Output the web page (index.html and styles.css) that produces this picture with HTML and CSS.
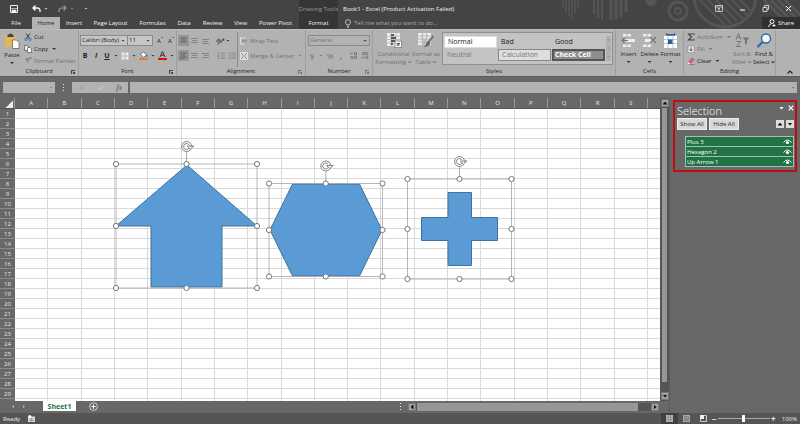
FILE: index.html
```
<!DOCTYPE html>
<html lang="en">
<head>
  <meta charset="utf-8">
  <title>Book1 - Excel</title>
  <link rel="stylesheet" href="styles.css">
</head>
<body>
  <header class="topbar">
    <svg class="topbar-art" width="240" height="29" viewBox="560 0 240 29">
      <g fill="none" stroke="#555">
        <path d="M563 0v7M566 0v12M569 0v16M572 0v19M575 0v14M578 0v8" stroke-width="1.5"/>
        <path d="M594 0v14M598 0v18M602 0v19" stroke-width="2"/>
        <path d="M611 0v20M616 0v19M621 0v17M626 0v12" stroke-width="3"/>
        <circle cx="678" cy="11" r="9" stroke-width="3"/>
        <circle cx="678" cy="11" r="3" stroke-width="2"/>
        <circle cx="725" cy="-4" r="31" stroke-width="3"/>
        <path d="M700 0l25 25M708 0l23 23M716 0l21 21M724 0l19 19M732 0l16 16M740 0l12 12" stroke-width="2"/>
        <path d="M764 0l29 29M771 0l29 29M778 0l22 22M785 0l15 15" stroke-width="3"/>
      </g>
      <circle cx="651" cy="0" r="6" fill="#555"/>
    </svg>
    <div class="titlebar">
      <div class="quick-access">
        <button class="icon-button" aria-label="Save"><svg width="8" height="8" viewBox="0 0 8 8"><path d="M.5.5h7v7h-7z" fill="none" stroke="#eee"/><path d="M2 5h4v3H2zM1 3.500h6" fill="#eee" stroke="#eee" stroke-width=".6"/></svg></button>
        <button class="icon-button" aria-label="Undo"><svg width="9" height="8" viewBox="0 0 9 8"><path d="M1 3h4.500q3 .3 2.500 4M3.500.5L1 3l2.500 2.500" fill="none" stroke="#fff" stroke-width="1.300"/></svg></button>
        <span class="caret"></span>
        <button class="icon-button" aria-label="Redo"><svg width="9" height="8" viewBox="0 0 9 8"><path d="M8 3H3.500Q.5 3.300 1 7M5.500.5L8 3 5.500 5.500" fill="none" stroke="#999" stroke-width="1.200"/></svg></button>
        <span class="caret dim"></span>
        <span class="caret last"></span>
      </div>
      <div class="context-title">Drawing Tools</div>
      <div class="doc-title">Book1 - Excel (Product Activation Failed)</div>
      <div class="window-buttons">
        <button class="icon-button" aria-label="Ribbon display options"><svg width="8" height="7" viewBox="0 0 8 7"><path d="M.5.5h7v6h-7zM.5 2h7M4 6V3M2.800 4L4 3l1.200 1" fill="none" stroke="#ddd" stroke-width=".8"/></svg></button>
        <button class="icon-button" aria-label="Minimize"><svg width="7" height="7" viewBox="0 0 7 7"><path d="M1 5h5" stroke="#fff"/></svg></button>
        <button class="icon-button" aria-label="Restore"><svg width="7" height="7" viewBox="0 0 7 7"><path d="M1 2.500h4v4H1zM2.500 2.500v-2h4v4H5" fill="none" stroke="#eee" stroke-width=".8"/></svg></button>
        <button class="icon-button" aria-label="Close"><svg width="7" height="7" viewBox="0 0 7 7"><path d="M1 1l5 5M6 1L1 6" stroke="#fff"/></svg></button>
      </div>
    </div>
    <nav class="tabs">
      <a href="#" class="tab">File</a>
      <a href="#" class="tab active">Home</a>
      <a href="#" class="tab">Insert</a>
      <a href="#" class="tab">Page Layout</a>
      <a href="#" class="tab">Formulas</a>
      <a href="#" class="tab">Data</a>
      <a href="#" class="tab">Review</a>
      <a href="#" class="tab">View</a>
      <a href="#" class="tab">Power Pivot</a>
      <a href="#" class="tab context">Format</a>
      <label class="tell-me">
        <svg width="6" height="9" viewBox="0 0 6 9"><path d="M2 6Q.6 4.500.6 3a2.400 2.400 0 0 1 4.800 0Q5.400 4.500 4 6zM2 7.200h2M2.200 8.400h1.600" fill="none" stroke="#ddd" stroke-width=".8"/></svg>
        <input type="text" placeholder="Tell me what you want to do..." aria-label="Tell me what you want to do">
      </label>
      <button class="share">
        <svg width="8" height="8" viewBox="0 0 8 8"><circle cx="4" cy="2.500" r="2" fill="none" stroke="#fff"/><path d="M.6 8q.4-3 3-3.300M4.500 6.500h3M6 5v3" fill="none" stroke="#fff" stroke-width=".9"/></svg>
        Share
      </button>
    </nav>
  </header>

  <section class="ribbon">
    <div class="group clipboard">
      <div class="group-body">
        <button class="big">
          <svg width="16" height="16" viewBox="0 0 16 16"><path d="M1 2h11v12H1z" fill="#e2b65b"/><path d="M3.500 1.500h1.500a1.600 1.600 0 0 1 3 0h1.500v2.500h-6z" fill="#444"/><path d="M8.500 7h4l2.500 2.500V15.500H8.500z" fill="#fff" stroke="#555" stroke-width=".7"/></svg>
          <span>Paste</span><span class="caret"></span>
        </button>
        <div class="rows">
          <button class="small"><svg width="8" height="8" viewBox="0 0 8 8"><path d="M2 .5l3.500 5M6 .5L2.500 5.500" stroke="#333" stroke-width=".9"/><circle cx="2" cy="6.300" r="1.200" fill="none" stroke="#2b6cb0" stroke-width=".8"/><circle cx="6" cy="6.300" r="1.200" fill="none" stroke="#2b6cb0" stroke-width=".8"/></svg>Cut</button>
          <button class="small"><svg width="8" height="8" viewBox="0 0 8 8"><path d="M.5.500h3L5 2v3.500H.5z" fill="#eee" stroke="#456" stroke-width=".7"/><path d="M3.500 2.500h2.500l1.500 1.500v3.500h-4z" fill="#fff" stroke="#456" stroke-width=".7"/></svg>Copy <span class="caret"></span></button>
          <button class="small off"><svg width="8" height="8" viewBox="0 0 8 8"><path d="M1 1.500l3-.5 1 2-1.500 3z" fill="#888"/><path d="M4.500 2l3-1.500" stroke="#777" stroke-width="1.300"/></svg>Format Painter</button>
        </div>
      </div>
      <div class="group-name">Clipboard<i class="launcher"></i></div>
    </div>

    <div class="group font">
      <div class="group-body rows two">
        <div class="line">
          <span class="combo font-name"><select aria-label="Font"><option>Calibri (Body)</option></select></span>
          <span class="combo font-size"><select aria-label="Font size"><option>11</option></select></span>
          <button class="letter grow">A<sup>ˆ</sup></button>
          <button class="letter">A<sup>ˇ</sup></button>
        </div>
        <div class="line spaced">
          <button class="letter"><b>B</b></button>
          <button class="letter"><b><em>I</em></b></button>
          <button class="letter"><b><u>U</u></b></button>
          <span class="caret"></span>
          <button class="letter" aria-label="Borders"><svg width="8" height="8" viewBox="0 0 8 8"><path d="M.5.500h7v7h-7z" fill="#eee"/><path d="M4 0v8M0 4h8" stroke="#999" stroke-width=".7"/></svg></button>
          <span class="caret"></span>
          <button class="letter" aria-label="Fill color"><svg width="9" height="9" viewBox="0 0 9 9"><path d="M1.500 3.500L4.500.8l3 3-3 2.700z" fill="#fff" stroke="#444" stroke-width=".7"/><path d="M7 3q1.800 1 1 3" fill="none" stroke="#2b6cb0"/><path d="M0 7h9v2H0z" fill="#ed7d31"/></svg></button>
          <span class="caret"></span>
          <button class="letter" aria-label="Font color"><svg width="9" height="9" viewBox="0 0 9 9"><path d="M2 6L4.500.5 7 6M3 4.200h3" fill="none" stroke="#333"/><path d="M0 7h9v2H0z" fill="#e01010"/></svg></button>
          <span class="caret"></span>
        </div>
      </div>
      <div class="group-name">Font<i class="launcher"></i></div>
    </div>

    <div class="group alignment">
      <div class="group-body">
        <div class="rows two align-buttons">
          <div class="line">
            <button class="align on" aria-label="Top align"><svg width="7" height="7" viewBox="0 0 7 7"><path d="M0 1h7M1 3h5M0 5h7" stroke="#555" stroke-width=".8"/></svg></button>
            <button class="align" aria-label="Middle align"><svg width="7" height="7" viewBox="0 0 7 7"><path d="M0 1.500h7M1 3.500h5M0 5.500h7" stroke="#777" stroke-width=".8"/></svg></button>
            <button class="align" aria-label="Bottom align"><svg width="7" height="7" viewBox="0 0 7 7"><path d="M0 2.500h7M1 4.500h5M0 6.500h7" stroke="#777" stroke-width=".8"/></svg></button>
            <button class="align gap" aria-label="Orientation"><svg width="9" height="8" viewBox="0 0 9 8"><circle cx="2" cy="4" r="1.300" fill="none" stroke="#444" stroke-width=".8"/><path d="M3 1.500l2.500 4M1.500 7.500L8 2M8 2L6 2.300M8 2l-.3 2" fill="none" stroke="#444" stroke-width=".9"/></svg></button>
            <span class="caret"></span>
          </div>
          <div class="line">
            <button class="align on" aria-label="Align left"><svg width="7" height="7" viewBox="0 0 7 7"><path d="M0 1h7M0 3h5M0 5h7M0 6.800h5" stroke="#555" stroke-width=".8"/></svg></button>
            <button class="align" aria-label="Center"><svg width="7" height="7" viewBox="0 0 7 7"><path d="M0 1.500h7M1 3.500h5M0 5.500h7" stroke="#777" stroke-width=".8"/></svg></button>
            <button class="align" aria-label="Align right"><svg width="7" height="7" viewBox="0 0 7 7"><path d="M0 1.500h7M2 3.500h5M0 5.500h7" stroke="#777" stroke-width=".8"/></svg></button>
            <button class="align gap" aria-label="Decrease indent"><svg width="8" height="7" viewBox="0 0 8 7"><path d="M0 1h8M4 3h4M4 5h4M0 6.700h8M3 4H0M1.300 2.800L0 4l1.300 1.200" fill="none" stroke="#888" stroke-width=".8"/></svg></button>
            <button class="align" aria-label="Increase indent"><svg width="8" height="7" viewBox="0 0 8 7"><path d="M0 1h8M4 3h4M4 5h4M0 6.700h8M0 4h3M1.700 2.800L3 4 1.700 5.200" fill="none" stroke="#888" stroke-width=".8"/></svg></button>
          </div>
        </div>
        <div class="rows two merge">
          <button class="small off"><svg width="8" height="8" viewBox="0 0 8 8"><path d="M.5.500v7M.5 1h5M.5 7h4" fill="none" stroke="#ddd"/><path d="M2 4h5.500M5 2.500L3.500 4 5 5.500" fill="none" stroke="#888"/></svg>Wrap Text</button>
          <button class="small off"><svg width="8" height="8" viewBox="0 0 8 8"><path d="M0 0h8v8H0z" fill="#ddd"/><path d="M1 1l2 2M7 1L5 3M1 7l2-2M7 7L5 5M2 4h4" stroke="#888" stroke-width=".9"/></svg>Merge &amp; Center <span class="caret dim"></span></button>
        </div>
      </div>
      <div class="group-name">Alignment<i class="launcher dim"></i></div>
    </div>

    <div class="group number">
      <div class="group-body rows two">
        <span class="combo disabled"><select aria-label="Number format" disabled><option>General</option></select></span>
        <div class="line number-buttons off">
          <button class="letter">$</button><span class="caret dim"></span>
          <button class="letter">%</button>
          <button class="letter"><b>,</b></button>
          <button class="letter bar" aria-label="Increase decimal"><svg width="8" height="7" viewBox="0 0 8 7"><path d="M3 1.500H0M1 .5L0 1.500l1 1" fill="none" stroke="#777" stroke-width=".7"/><path d="M4.500.5h2v2.500h-2zM1 4.500h2v2.200H1zM4.500 4.500h2v2.200h-2z" fill="none" stroke="#777" stroke-width=".9"/></svg></button>
          <button class="letter" aria-label="Decrease decimal"><svg width="8" height="7" viewBox="0 0 8 7"><path d="M0 5.500h3M2 4.500l1 1-1 1" fill="none" stroke="#777" stroke-width=".7"/><path d="M1.500.5h2v2.200h-2zM4.800.5h2v2.200h-2zM4.800 4.300h2v2.200h-2z" fill="none" stroke="#777" stroke-width=".9"/></svg></button>
        </div>
      </div>
      <div class="group-name">Number<i class="launcher dim"></i></div>
    </div>

    <div class="group styles">
      <div class="group-body">
        <button class="big off">
          <svg width="16" height="15" viewBox="0 0 16 15"><path d="M1 0h13v13H1z" fill="#eee"/><path d="M1 3.300h13M1 6.500h13M1 9.800h13M5 0v13M10 0v13" stroke="#aaa" stroke-width=".7"/><path d="M5 1h3v2H5zM5 4h5v2H5zM5 7h4v2H5zM5 10h2v2H5z" fill="#555"/><path d="M9 8h6.500v6.500H9z" fill="#fff" stroke="#777" stroke-width=".8"/><path d="M10.500 10.500h3.500M10.500 12h3.500M13 9.500l-1.500 3.500" stroke="#333" stroke-width=".7"/></svg>
          <span>Conditional<br>Formatting <span class="caret dim"></span></span>
        </button>
        <button class="big off table">
          <svg width="16" height="15" viewBox="0 0 16 15"><path d="M0 0h13v12H0z" fill="#eee"/><path d="M0 3h13M0 6h13M0 9h13M4.300 0v12M8.600 0v12" stroke="#999" stroke-width=".7"/><path d="M4.300 6h4.300v6H4.300z" fill="#bbb"/><path d="M15.500 3L10.500 9" stroke="#777" stroke-width="2"/><path d="M10.500 8l2 2q-1.500 4-7 4 3-1.500 3-4 .5-2 2-2z" fill="#666"/></svg>
          <span>Format as<br>Table <span class="caret dim"></span></span>
        </button>
        <div class="gallery">
          <button class="style normal">Normal</button>
          <button class="style">Bad</button>
          <button class="style">Good</button>
          <button class="style neutral">Neutral</button>
          <button class="style calc">Calculation</button>
          <button class="style check">Check Cell</button>
          <div class="gallery-scroll"><span class="caret"></span><span class="caret"></span><span class="caret"></span></div>
        </div>
      </div>
      <div class="group-name">Styles</div>
    </div>

    <div class="group cells">
      <div class="group-body">
        <button class="big"><svg width="15" height="15" viewBox="0 0 15 15"><path d="M2 1h3.500v2.500H2zM6.500 1H10v2.500H6.500zM5 6h9v3H5zM2 11.500h3.500V14H2zM6.500 11.500H10V14H6.500z" fill="#eee"/><path d="M7 7.500H1M3.500 5L1 7.500 3.500 10" fill="none" stroke="#777" stroke-width="1.200"/></svg><span>Insert</span><span class="caret"></span></button>
        <button class="big"><svg width="15" height="15" viewBox="0 0 15 15"><path d="M1 1h3.500v2.500H1zM5.500 1H9v2.500H5.500zM3 6h6v3H3zM1 11.500h3.500V14H1zM5.500 11.500H9V14H5.500z" fill="#eee"/><path d="M8 4l6 6M14 4l-6 6" stroke="#777" stroke-width="1.200"/></svg><span>Delete</span><span class="caret"></span></button>
        <button class="big"><svg width="15" height="15" viewBox="0 0 15 15"><path d="M1 3h13v12H1z" fill="#fff"/><path d="M1 6.500h13M1 10.500h13M5 3v12M10 3v12" stroke="#aaa" stroke-width=".7"/><path d="M5 6.500h4.500V11H5zM3 0v2.500h9V0h-1v1H4V0z" fill="#1f5fa8"/></svg><span>Format</span><span class="caret"></span></button>
      </div>
      <div class="group-name">Cells</div>
    </div>

    <div class="group editing">
      <div class="group-body">
        <div class="rows">
          <button class="small off"><svg width="8" height="8" viewBox="0 0 8 8"><path d="M7 1.800V1H1.500l3 3-3 3H7v-.8" fill="none" stroke="#444" stroke-width="1.200"/></svg>AutoSum <span class="caret dim"></span></button>
          <button class="small off"><svg width="8" height="8" viewBox="0 0 8 8"><path d="M1 1h6v6.500H1z" fill="#eee" stroke="#888" stroke-width=".6"/><path d="M4 2v4M2.500 4.500L4 6l1.500-1.500" fill="none" stroke="#444" stroke-width=".9"/></svg>Fill <span class="caret dim"></span></button>
          <button class="small"><svg width="8" height="8" viewBox="0 0 8 8"><path d="M1 5l4-4.500 2.500 2L3.500 7z" fill="#d8577a"/><path d="M1 5l2.500 2L2.500 7.500.5 6z" fill="#fff"/><path d="M2 7.700h6" stroke="#555" stroke-width=".6"/></svg>Clear <span class="caret"></span></button>
        </div>
        <button class="big off"><svg width="15" height="15" viewBox="0 0 15 15"><path d="M1 6.500L3.500.5 6 6.500M2 4.500h3M1.500 8.500h4l-4 5h4.500" fill="none" stroke="#777"/><path d="M7.500 4.500h7L12 7.500V12l-2-1.500v-3z" fill="#777"/></svg><span>Sort &amp;<br>Filter <span class="caret dim"></span></span></button>
        <button class="big"><svg width="16" height="15" viewBox="0 0 16 15"><circle cx="10" cy="5.500" r="4.500" fill="#f4f8fc" stroke="#2a65a5" stroke-width="1.400"/><path d="M6.500 9L1.500 14" stroke="#2a65a5" stroke-width="2.200"/></svg><span>Find &amp;<br>Select <span class="caret"></span></span></button>
      </div>
      <div class="group-name">Editing</div>
    </div>
    <button class="collapse" aria-label="Collapse the ribbon"><svg width="6" height="4" viewBox="0 0 6 4"><path d="M.5 3.500L3 1l2.500 2.500" fill="none" stroke="#222" stroke-width="1.100"/></svg></button>
  </section>

  <section class="formula-bar">
    <span class="combo name-box"><select aria-label="Name box"><option></option></select></span>
    <span class="dots"></span>
    <div class="formula-buttons">
      <button aria-label="Cancel"><svg width="7" height="7" viewBox="0 0 7 7"><path d="M1 1l5 5M6 1L1 6" stroke="#999"/></svg></button>
      <button aria-label="Enter"><svg width="7" height="7" viewBox="0 0 7 7"><path d="M.5 3.500L2.500 6l4-5" fill="none" stroke="#ccc"/></svg></button>
      <button class="fx">fx</button>
    </div>
    <label class="formula"><input type="text" aria-label="Formula bar"><span class="caret dim"></span></label>
  </section>

  <main class="workspace">
    <div class="sheet-area">
      <div class="sheet">
        <table class="cells-table">
          <thead><tr id="column-heads"></tr></thead>
          <tbody id="rows"></tbody>
        </table>
        <svg class="drawing" width="660" height="304" viewBox="0 98 660 304">
          <defs>
            <circle id="handle" r="2.600" fill="#fff" stroke="#777"/>
            <g id="rotate" fill="none" stroke="#808080">
              <circle r="4.300" fill="#fff" stroke="none"/>
              <path d="M4.500-2.300A5 5 0 1 0 4.500 2.300M2.400-1.800A3 3 0 1 0 2.400 1.800"/>
              <path d="M4.500-2.300L5 0M1 0L4 2.500 7.500-.5H1z"/>
              <path d="M0 5.500V17" stroke="#999" stroke-width=".8"/>
            </g>
          </defs>
          <g fill="#5b9bd5" stroke="#41719c">
            <path d="M187 165L257 226H222V287H151V226H116z"/>
            <path d="M292.500 184H359.500L382 230L359.500 276H292.500L270 230z"/>
            <path d="M448 192.500H471.500V217.500H497.500V240.500H471.500V265.500H448V240.500H421.500V217.500H448z"/>
          </g>
          <g id="selections"></g>
        </svg>
      </div>
      <div class="scroll vertical">
        <button class="scroll-button" aria-label="Scroll up"><i class="tri up"></i></button>
        <div class="thumb"></div>
        <button class="scroll-button" aria-label="Scroll down"><i class="tri down"></i></button>
      </div>
      <div class="sheet-bar">
        <button class="sheet-nav" aria-label="Previous sheet"><i class="tri left"></i></button>
        <button class="sheet-nav" aria-label="Next sheet"><i class="tri right"></i></button>
        <button class="sheet-tab">Sheet1</button>
        <button class="add-sheet" aria-label="New sheet"><svg width="9" height="9" viewBox="0 0 9 9"><circle cx="4.500" cy="4.500" r="3.900" fill="none" stroke="#ddd" stroke-width=".9"/><path d="M4.500 2.300v4.400M2.300 4.500h4.400" stroke="#fff"/></svg></button>
        <span class="dots"></span>
        <div class="scroll horizontal">
          <button class="scroll-button" aria-label="Scroll left"><i class="tri left"></i></button>
          <div class="thumb"></div>
          <button class="scroll-button" aria-label="Scroll right"><i class="tri right"></i></button>
        </div>
      </div>
    </div>

    <aside class="pane">
      <div class="selection-pane">
        <div class="pane-head">
          <h2>Selection</h2>
          <button class="icon-button" aria-label="Pane options"><i class="tri down"></i></button>
          <button class="icon-button" aria-label="Close pane"><svg width="6" height="6" viewBox="0 0 6 6"><path d="M.7.7l4.600 4.600M5.300.7L.7 5.300" stroke="#fff" stroke-width="1.200"/></svg></button>
        </div>
        <div class="pane-actions">
          <button class="show-hide">Show All</button>
          <button class="show-hide">Hide All</button>
          <button class="move first" aria-label="Bring forward"><i class="tri up"></i></button>
          <button class="move" aria-label="Send backward"><i class="tri down"></i></button>
        </div>
        <ul class="objects">
          <li>Plus 3 <button class="icon-button" aria-label="Hide Plus 3"><svg width="9" height="6" viewBox="0 0 9 6"><path d="M.5 3.500Q4.500-1.500 8.500 3.500" fill="none" stroke="#fff"/><circle cx="4.500" cy="3.500" r="1.600" fill="#fff"/></svg></button></li>
          <li>Hexagon 2 <button class="icon-button" aria-label="Hide Hexagon 2"><svg width="9" height="6" viewBox="0 0 9 6"><path d="M.5 3.500Q4.500-1.500 8.500 3.500" fill="none" stroke="#fff"/><circle cx="4.500" cy="3.500" r="1.600" fill="#fff"/></svg></button></li>
          <li>Up Arrow 1 <button class="icon-button" aria-label="Hide Up Arrow 1"><svg width="9" height="6" viewBox="0 0 9 6"><path d="M.5 3.500Q4.500-1.500 8.500 3.500" fill="none" stroke="#fff"/><circle cx="4.500" cy="3.500" r="1.600" fill="#fff"/></svg></button></li>
        </ul>
      </div>
    </aside>
  </main>

  <footer class="status">
    <span>Ready</span>
    <svg class="macro" width="7" height="7" viewBox="0 0 7 7"><path d="M0 1.500h7V7H0z" fill="#ddd"/><path d="M1 4h5M1 5.500h5M3.500 3v4" stroke="#777" stroke-width=".5"/><circle cx="1.800" cy="1.500" r="1.500" fill="#fff"/></svg>
    <div class="views">
      <button class="view on" aria-label="Normal view"><svg width="7" height="7" viewBox="0 0 7 7"><path d="M0 0h7v7H0z" fill="#bbb"/><path d="M0 2.300h7M0 4.600h7M2.300 0v7M4.600 0v7" stroke="#777" stroke-width=".5"/></svg></button>
      <button class="view" aria-label="Page layout view"><svg width="7" height="7" viewBox="0 0 7 7"><path d="M0 0h7v7H0z" fill="#aaa"/><path d="M1.500 1.500h4v4h-4zM2 3h3M2 4.300h3" fill="none" stroke="#666" stroke-width=".6"/></svg></button>
      <button class="view" aria-label="Page break view"><svg width="7" height="7" viewBox="0 0 7 7"><path d="M.5.500h6v6h-6z" fill="none" stroke="#ccc"/><path d="M0 0h4v4H0z" fill="#eee"/></svg></button>
    </div>
    <button class="zoom-step">−</button>
    <input type="range" class="zoom" min="0" max="200" value="100" aria-label="Zoom">
    <button class="zoom-step">+</button>
    <span class="percent">100%</span>
  </footer>

  <script>
    const heads = document.getElementById("column-heads");
    const rows = document.getElementById("rows");
    const letters = "ABCDEFGHIJKLMNOPQRS".split("");
    const rowCount = 29;

    heads.innerHTML = '<th class="corner"></th>' + letters.map(l => `<th>${l}</th>`).join("") + "<th></th>";

    // one extra unlabelled row runs under the sheet tabs
    for (let i = 1; i <= rowCount + 1; i++) {
      rows.innerHTML += `<tr><th>${i <= rowCount ? i : ""}</th>${"<td></td>".repeat(letters.length + 1)}</tr>`;
    }

    // selection frames: left, top, right, bottom
    const frames = [
      [116, 164, 257, 288],
      [269, 183.5, 382.5, 276.5],
      [407.5, 179, 511.5, 279]
    ];

    let markup = "";
    frames.forEach(([x1, y1, x2, y2]) => {
      const cx = (x1 + x2) / 2;
      const cy = (y1 + y2) / 2;
      markup += `<rect x="${x1}" y="${y1}" width="${x2 - x1}" height="${y2 - y1}" fill="none" stroke="#a6a6a6" stroke-width="0.8"/>`;
      markup += `<use href="#rotate" x="${cx}" y="${y1 - 17.5}"/>`;
      [[x1, y1], [cx, y1], [x2, y1], [x1, cy], [x2, cy], [x1, y2], [cx, y2], [x2, y2]].forEach(([x, y]) => {
        markup += `<use href="#handle" x="${x}" y="${y}"/>`;
      });
    });
    document.getElementById("selections").innerHTML = markup;
  </script>
</body>
</html>
```
FILE: styles.css
```
* {
  box-sizing: border-box;
}

body {
  margin: 0;
  height: 100vh;
  display: flex;
  flex-direction: column;
  overflow: hidden;
  background-color: #686868;
  color: #222;
  font-family: "Open Sans", "Noto Sans", sans-serif;
  font-size: 6px;
  line-height: 8px;
}

button,
input,
select {
  font: inherit;
  color: inherit;
  margin: 0;
  padding: 0;
  border: none;
  border-radius: 0;
  background: none;
  outline: none;
}

a {
  color: inherit;
  text-decoration: none;
}

svg {
  display: block;
  flex: none;
}

.caret {
  display: inline-block;
  flex: none;
  width: 4px;
  height: 2px;
  background-color: #333;
  clip-path: polygon(0 0, 100% 0, 50% 100%);
  vertical-align: middle;
}

.caret.dim {
  background-color: #777;
}

.tri {
  display: block;
  width: 5px;
  height: 3px;
  background-color: #111;
}

.tri.up {
  clip-path: polygon(50% 0, 100% 100%, 0 100%);
}

.tri.down {
  clip-path: polygon(0 0, 100% 0, 50% 100%);
}

.tri.left,
.tri.right {
  width: 3px;
  height: 5px;
}

.tri.left {
  clip-path: polygon(100% 0, 100% 100%, 0 50%);
}

.tri.right {
  clip-path: polygon(0 0, 100% 50%, 0 100%);
}

.icon-button {
  display: flex;
  align-items: center;
  justify-content: center;
}

/* top bar */
.topbar {
  position: relative;
  background-color: #444;
  color: #f2f2f2;
  height: 29px;
  flex: none;
}

.topbar-art {
  position: absolute;
  right: 0;
  top: 0;
}

.titlebar {
  position: relative;
  display: grid;
  grid-template-columns: 299px 39px 1fr auto;
  height: 17px;
  align-items: center;
}

.quick-access {
  display: flex;
  align-items: center;
  padding-left: 10px;
}

.quick-access .caret {
  background-color: #ccc;
  margin: 0 10px 0 3px;
}

.quick-access .icon-button:first-child {
  margin-right: 14px;
}

.quick-access .caret.dim {
  background-color: #888;
}

.quick-access .caret.last {
  margin: 0;
}

.context-title {
  display: flex;
  align-items: center;
  justify-content: center;
  height: 17px;
  background-color: #363636;
  color: #999;
  white-space: nowrap;
}

.doc-title {
  padding-left: 5px;
}

.window-buttons {
  display: flex;
  gap: 16px;
  padding-right: 8px;
}

.tabs {
  position: relative;
  display: grid;
  grid-template-columns: 32px 28px 28px 45px 39px 24px 33px 23px 47px 39px 1fr 38px;
  height: 12px;
}

.tab {
  text-align: center;
  line-height: 12px;
  white-space: nowrap;
}

.tab.active {
  background-color: #b2b2b2;
  color: #222;
}

.tab.context {
  background-color: #363636;
}

.tell-me {
  display: flex;
  align-items: center;
  gap: 3px;
  padding-left: 7px;
}

.tell-me input {
  flex: 1;
}

.tell-me input::placeholder {
  color: #aaa;
}

.share {
  display: flex;
  align-items: center;
  justify-content: center;
  gap: 2px;
  background-color: #303030;
}

/* ribbon */
.ribbon {
  display: flex;
  flex: none;
  height: 47px;
  background-color: #b2b2b2;
  border-top: 1px solid #bcbcbc;
}

.group {
  display: flex;
  flex-direction: column;
  border-right: 1px solid #9e9e9e;
}

.group-body {
  display: flex;
  flex: 1;
  padding-top: 2px;
}

.group-name {
  display: flex;
  height: 9px;
  justify-content: center;
  position: relative;
}

.launcher {
  position: absolute;
  right: 3px;
  top: 3px;
  width: 4px;
  height: 4px;
  border-left: 1px solid #444;
  border-top: 1px solid #444;
  background: linear-gradient(#444, #444) right bottom / 2px 2px no-repeat;
}

.launcher.dim {
  opacity: 0.5;
}

.off {
  color: #707070;
}

.clipboard {
  width: 79px;
}

.font {
  width: 98px;
}

.alignment {
  width: 129px;
}

.number {
  width: 67px;
}

.styles {
  width: 243px;
}

.cells {
  width: 68px;
}

.editing {
  width: 92px;
}

.big {
  display: flex;
  flex-direction: column;
  align-items: center;
  padding-top: 1px;
  white-space: nowrap;
  gap: 2px;
}

.big > .caret {
  margin-top: 1px;
}

.clipboard .big {
  width: 24px;
}

.rows {
  display: flex;
  flex-direction: column;
  gap: 4px;
}

.group-body > .rows {
  padding-top: 1px;
}

.group-body.rows.two,
.group-body > .rows.two {
  gap: 4px;
}

.group-body.rows.two {
  padding-top: 5px;
}

.group-body > .rows.two {
  padding-top: 3px;
}

.small {
  display: flex;
  align-items: center;
  gap: 2px;
  height: 8px;
  white-space: nowrap;
}

.small .caret {
  margin-left: 2px;
}

.line {
  display: flex;
  align-items: center;
  height: 11px;
}

.combo {
  display: grid;
  align-items: center;
  height: 11px;
  border: 1px solid #8a8a8a;
  background-color: #c6c6c6;
}

.combo select {
  appearance: none;
  grid-area: 1 / 1;
  width: 100%;
  height: 9px;
  line-height: 9px;
  padding-left: 1px;
}

.combo::after {
  content: "";
  grid-area: 1 / 1;
  justify-self: end;
  width: 4px;
  height: 2px;
  margin-right: 2px;
  background-color: #333;
  clip-path: polygon(0 0, 100% 0, 50% 100%);
  pointer-events: none;
}

.combo.disabled {
  margin: 0 2px;
  background-color: #b2b2b2;
  color: #777;
}

.combo.disabled select {
  opacity: 1;
}

.font-name {
  width: 48px;
  margin-left: 1px;
}

.font-size {
  width: 25px;
  border-left: none;
}

.letter {
  display: flex;
  justify-content: center;
  min-width: 8px;
}

.letter sup {
  font-size: 6px;
  line-height: 4px;
}

.letter.grow {
  margin: 0 3px;
}

.spaced {
  padding-left: 2px;
  gap: 3px;
}

.spaced .letter {
  font-size: 7px;
}

.align-buttons {
  width: 61px;
  padding-left: 1px;
  border-right: 1px solid #8a8a8a;
}

.align {
  display: flex;
  align-items: center;
  justify-content: center;
  width: 11px;
  height: 11px;
}

.align.gap {
  margin-left: 4px;
}

.align.on {
  background-color: #969696;
}

.merge {
  padding-left: 2px;
}

.merge .small {
  height: 11px;
}

.number-buttons {
  padding-left: 2px;
  gap: 3px;
}

.number-buttons .letter {
  font-size: 8px;
}

.number-buttons .bar {
  margin-left: 2px;
}

.styles .group-body {
  padding-left: 3px;
}

.cells .group-body {
  padding-left: 2px;
}

.styles .big {
  width: 35px;
}

.styles .big.table {
  width: 30px;
}

.gallery {
  flex: 1;
  display: grid;
  grid-template-columns: 53px 53px 53px 1fr;
  grid-template-rows: 12px 12px;
  gap: 1px;
  margin: 0 2px 0 1px;
  padding: 3px 1px;
  height: 33px;
  border: 1px solid #909090;
  background-color: #c3c3c3;
}

.style {
  text-align: left;
  padding: 0 3px;
  font-size: 7px;
  background-color: #c3c3c3;
}

.style.normal {
  background-color: #fff;
  border: 1px solid #ddd;
}

.style.neutral {
  color: #777;
}

.style.calc {
  color: #777;
  background-color: #dedede;
  border: 1px solid #888;
}

.style.check {
  color: #fff;
  font-weight: bold;
  background-color: #8e8e8e;
  border: 2px solid #555;
  padding: 0 1px;
}

.gallery-scroll {
  grid-column: 4;
  grid-row: 1 / 3;
  display: flex;
  flex-direction: column;
  align-items: center;
  justify-content: space-around;
  background-color: #b2b2b2;
}

.gallery-scroll .caret {
  background-color: #999;
}

.cells .big {
  width: 21px;
}

.editing .group-body {
  padding-left: 3px;
}

.editing .rows {
  width: 44px;
}

.editing .big {
  width: 22px;
}

.collapse {
  margin-left: auto;
  padding: 0 7px 2px 0;
  align-self: flex-end;
}

/* formula bar */
.formula-bar {
  display: flex;
  flex: none;
  height: 22px;
  padding: 5px 3px;
  border-top: 1px solid #5c5c5c;
}

.name-box {
  width: 52px;
  border: none;
  background-color: #b2b2b2;
}

.name-box::after {
  background-color: #888;
}

.dots {
  width: 1px;
  height: 7px;
  margin: 2px 8px;
  background: repeating-linear-gradient(#eee 0 1px, transparent 1px 3px);
}

.formula-buttons {
  display: flex;
  align-items: center;
  justify-content: space-around;
  width: 56px;
  height: 11px;
  margin-right: 2px;
  background-color: #b2b2b2;
}

.fx {
  font-family: "Liberation Serif", serif;
  font-style: italic;
  font-size: 8px;
  color: #555;
}

.formula {
  display: flex;
  flex: 1;
  align-items: center;
  height: 11px;
  padding-right: 2px;
  background-color: #b2b2b2;
}

.formula input {
  flex: 1;
}

/* sheet */
.workspace {
  display: flex;
  flex: 1;
  min-height: 0;
}

.sheet-area {
  display: grid;
  flex: 1;
  grid-template-columns: 1fr 10px;
  grid-template-rows: 1fr 12px;
  min-width: 0;
}

.sheet {
  position: relative;
  overflow: hidden;
  min-height: 0;
}

.drawing {
  position: absolute;
  left: 0;
  top: 0;
}

.cells-table,
.cells-table thead,
.cells-table tbody {
  display: block;
}

.cells-table tr {
  display: grid;
  grid-template-columns: 15px repeat(19, 1fr) 12px;
}

.cells-table th {
  height: 10px;
  padding: 0;
  font-size: 6px;
  font-weight: normal;
  line-height: 10px;
  color: #e6e6e6;
  background-color: #686868;
  border-bottom: 1px solid #8c8c8c;
}

.cells-table thead th {
  height: 11px;
  border-right: 1px solid #9a9a9a;
  border-bottom-color: #555;
}

.cells-table thead .corner {
  background: linear-gradient(135deg, transparent 50%, #eee 50%) 6px 3px / 7px 7px no-repeat #686868;
}

.cells-table td {
  height: 10px;
  padding: 0;
  background-color: #fff;
  border-right: 1px solid #d9d9d9;
  border-bottom: 1px solid #d9d9d9;
}

.cells-table td:last-child,
.cells-table thead th:last-child {
  border-right: none;
}

.scroll {
  display: flex;
  background-color: #555;
}

.scroll.vertical {
  flex-direction: column;
  padding: 1px;
  border-right: 1px solid #5c5c5c;
}

.scroll-button {
  display: flex;
  align-items: center;
  justify-content: center;
  width: 8px;
  height: 8px;
  flex: none;
  background-color: #a0a0a0;
  border: 1px solid #777;
}

.thumb {
  background-color: #969696;
}

.vertical .thumb {
  flex: 1;
  margin: 1px 1px 10px;
}

.sheet-bar {
  grid-column: 1 / 3;
  display: flex;
  align-items: flex-start;
  border-right: 1px solid #5c5c5c;
}

.sheet-nav {
  padding: 4px 0 0 12px;
}

.sheet-nav + .sheet-nav {
  padding-left: 9px;
}

.sheet-nav .tri {
  width: 2px;
  height: 3px;
  background-color: #bbb;
}

.sheet-tab {
  width: 33px;
  height: 10px;
  margin-left: 18px;
  font-size: 7px;
  line-height: 9px;
  font-weight: bold;
  color: #217346;
  background-color: #fff;
}

.add-sheet {
  margin: 1px 0 0 13px;
}

.sheet-bar .dots {
  margin-left: auto;
  margin-right: 7px;
}

.horizontal {
  width: 251px;
  height: 8px;
  margin: 2px 10px 0 0;
}

.horizontal .thumb {
  flex: 1;
  margin: 0 13px 0 1px;
}

/* selection pane */
.pane {
  width: 130px;
  padding: 2px 3px;
}

.selection-pane {
  padding: 1px 1px 3px 2px;
  border: 2px solid #c00d14;
}

.pane-head {
  display: flex;
  align-items: flex-start;
  gap: 4px;
  height: 15px;
  padding-top: 1px;
}

.pane-head h2 {
  flex: 1;
  margin: 0;
  font-size: 11px;
  font-weight: 300;
  line-height: 14px;
  color: #fff;
}

.pane-head .icon-button {
  height: 8px;
}

.pane-head .tri {
  background-color: #fff;
}

.pane-actions {
  display: flex;
  align-items: center;
  gap: 2px;
}

.show-hide {
  width: 30px;
  height: 12px;
  border: 1px solid #eee;
  background-color: #d8d8d8;
  white-space: nowrap;
}

.move {
  display: flex;
  align-items: center;
  justify-content: center;
  width: 8px;
  height: 8px;
  background-color: #ddd;
}

.move.first {
  margin-left: auto;
}

.objects {
  margin: 6px 0 0 8px;
  padding: 0;
  list-style: none;
}

.objects li {
  display: flex;
  align-items: center;
  justify-content: space-between;
  height: 10px;
  padding: 0 1px;
  color: #fff;
  background-color: #217346;
  border: 1px solid #9fc4ae;
  border-top: none;
}

.objects li:first-child {
  height: 11px;
  border-top: 1px solid #9fc4ae;
}

/* status bar */
.status {
  display: flex;
  flex: none;
  align-items: center;
  height: 11px;
  padding: 0 3px;
  color: #eee;
  background-color: #555;
}

.macro {
  margin-left: 8px;
}

.views {
  display: flex;
  margin-left: auto;
}

.view {
  display: flex;
  align-items: center;
  justify-content: center;
  width: 17px;
  height: 11px;
}

.view.on {
  background-color: #404040;
}

.zoom-step {
  width: 5px;
  font-size: 8px;
  font-weight: bold;
}

.zoom {
  appearance: none;
  width: 52px;
  height: 9px;
  margin: 0 1px;
  background: linear-gradient(#aaa, #aaa) center / 100% 1px no-repeat;
}

.zoom::-webkit-slider-thumb {
  appearance: none;
  width: 3px;
  height: 7px;
  background-color: #fff;
}

.percent {
  margin-left: 6px;
}
```
